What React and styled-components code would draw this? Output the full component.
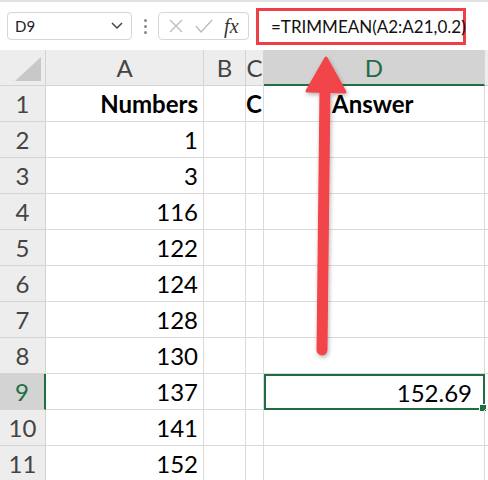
import React from 'react';
import styled, { createGlobalStyle } from 'styled-components';

const Global = createGlobalStyle`
  body { margin: 0; background: #fff; font-family: Lato, "Open Sans", sans-serif; }
`;

const Page = styled.div`
  position: relative;
  width: 488px;
  height: 480px;
  overflow: hidden;
  border-top: 2px solid #e1e1e1;
  box-sizing: border-box;
`;

const Bar = styled.div`
  height: 48px;
  display: flex;
  align-items: center;
  padding-left: 7px;
`;

const NameBox = styled.div`
  width: 125px;
  height: 28px;
  box-sizing: border-box;
  border: 1px solid #d6d6d6;
  border-radius: 4px;
  display: flex;
  align-items: center;
  justify-content: space-between;
  padding: 0 8px 0 7px;
  font-size: 15px;
  color: #222;
`;

const Dots = styled.div`
  width: 26px;
  display: flex;
  flex-direction: column;
  align-items: center;
  gap: 3px;
  span { width: 3px; height: 3px; background: #888; border-radius: 50%; }
`;

const FxBox = styled.div`
  width: 91px;
  height: 28px;
  box-sizing: border-box;
  border: 1px solid #d6d6d6;
  border-radius: 4px;
  display: flex;
  align-items: center;
  justify-content: space-around;
  padding: 0 4px;
  font-family: "Liberation Serif", serif;
  font-style: italic;
  font-size: 20px;
  color: #333;
`;

const Formula = styled.div`
  margin-left: 7px;
  width: 210px;
  height: 37px;
  box-sizing: border-box;
  border: 3px solid #ef3e45;
  display: flex;
  align-items: center;
  padding-left: 12px;
  font-size: 17px;
  color: #111;
`;

const Grid = styled.div`
  display: grid;
  grid-template-columns: 46px 158px 42px 18px 221px 10px;
  grid-auto-rows: 36px;
`;

const ColHead = styled.div`
  background: ${p => (p.$sel ? '#d3d3d3' : '#ededed')};
  border-right: 1px solid #d4d4d4;
  border-bottom: ${p => (p.$sel ? '2px solid #1e6e42' : '1px solid #d4d4d4')};
  color: ${p => (p.$sel ? '#1e6e42' : '#444')};
  font-size: 24px;
  display: flex;
  align-items: center;
  justify-content: center;
  overflow: hidden;
  box-sizing: border-box;
`;

const RowHead = styled.div`
  background: ${p => (p.$sel ? '#d3d3d3' : '#ededed')};
  border-bottom: 1px solid #d4d4d4;
  border-right: ${p => (p.$sel ? '2px solid #1e6e42' : '1px solid #d4d4d4')};
  color: ${p => (p.$sel ? '#1e6e42' : '#444')};
  font-size: 24px;
  display: flex;
  align-items: center;
  justify-content: center;
  box-sizing: border-box;
`;

const Cell = styled.div`
  border-right: 1px solid #dadada;
  border-bottom: 1px solid #dadada;
  font-size: 24px;
  font-weight: ${p => (p.$bold ? 700 : 400)};
  color: #000;
  display: flex;
  align-items: center;
  justify-content: ${p => p.$align || 'flex-end'};
  padding: 0 5px;
  overflow: hidden;
  white-space: nowrap;
  box-sizing: border-box;
  position: relative;
  ${p => p.$active && `
    border: 2px solid #1e6e42;
    padding-right: 11px;
    overflow: visible;
    &::after {
      content: '';
      position: absolute;
      right: -4px;
      bottom: -4px;
      width: 6px;
      height: 6px;
      background: #1e6e42;
      border: 1px solid #fff;
    }
  `}
`;

const Arrow = styled.svg`
  position: absolute;
  left: 0;
  top: 0;
  pointer-events: none;
`;

const nums = [1, 3, 116, 122, 124, 128, 130, 137, 141, 152];

export default function App() {
  return (
    <Page>
      <Global />
      <Bar>
        <NameBox>
          D9
          <svg width="12" height="8" viewBox="0 0 12 8"><path d="M1 1l5 5 5-5" fill="none" stroke="#444" strokeWidth="1.5" /></svg>
        </NameBox>
        <Dots><span /><span /><span /></Dots>
        <FxBox>
          <svg width="16" height="16" viewBox="0 0 16 16"><path d="M2 2l12 12M14 2L2 14" stroke="#bbb" strokeWidth="1.3" /></svg>
          <svg width="18" height="16" viewBox="0 0 18 16"><path d="M1 8l5 6L17 2" fill="none" stroke="#bbb" strokeWidth="1.3" /></svg>
          <span>fx</span>
        </FxBox>
        <Formula>=TRIMMEAN(A2:A21,0.2)</Formula>
      </Bar>
      <Grid>
        <ColHead>
          <svg width="40" height="30" viewBox="0 0 40 30"><path d="M38 4L38 28L12 28Z" fill="#c8c8c8" /></svg>
        </ColHead>
        <ColHead>A</ColHead>
        <ColHead>B</ColHead>
        <ColHead>C</ColHead>
        <ColHead $sel>D</ColHead>
        <ColHead />

        <RowHead>1</RowHead>
        <Cell $bold>Numbers</Cell>
        <Cell />
        <Cell $bold $align="flex-start" style={{ padding: 0 }}>C</Cell>
        <Cell $bold $align="flex-start" style={{ paddingLeft: 68 }}>Answer</Cell>
        <Cell />

        {nums.map((n, i) => {
          const r = i + 2;
          return (
            <React.Fragment key={r}>
              <RowHead $sel={r === 9}>{r}</RowHead>
              <Cell>{n}</Cell>
              <Cell />
              <Cell />
              <Cell $active={r === 9}>{r === 9 ? '152.69' : ''}</Cell>
              <Cell />
            </React.Fragment>
          );
        })}
      </Grid>
      <Arrow width="488" height="480" viewBox="0 0 488 480">
        <defs>
          <filter id="sh" x="-20%" y="-20%" width="140%" height="140%">
            <feDropShadow dx="1" dy="2" stdDeviation="2" floodColor="#000" floodOpacity="0.3" />
          </filter>
        </defs>
        <g filter="url(#sh)">
          <line x1="322" y1="348" x2="325" y2="86" stroke="#f24449" strokeWidth="11" strokeLinecap="round" />
          <path d="M326 56 L345 90 L307 89 Z" fill="#f24449" stroke="#f24449" strokeWidth="3" strokeLinejoin="round" />
        </g>
      </Arrow>
    </Page>
  );
}
